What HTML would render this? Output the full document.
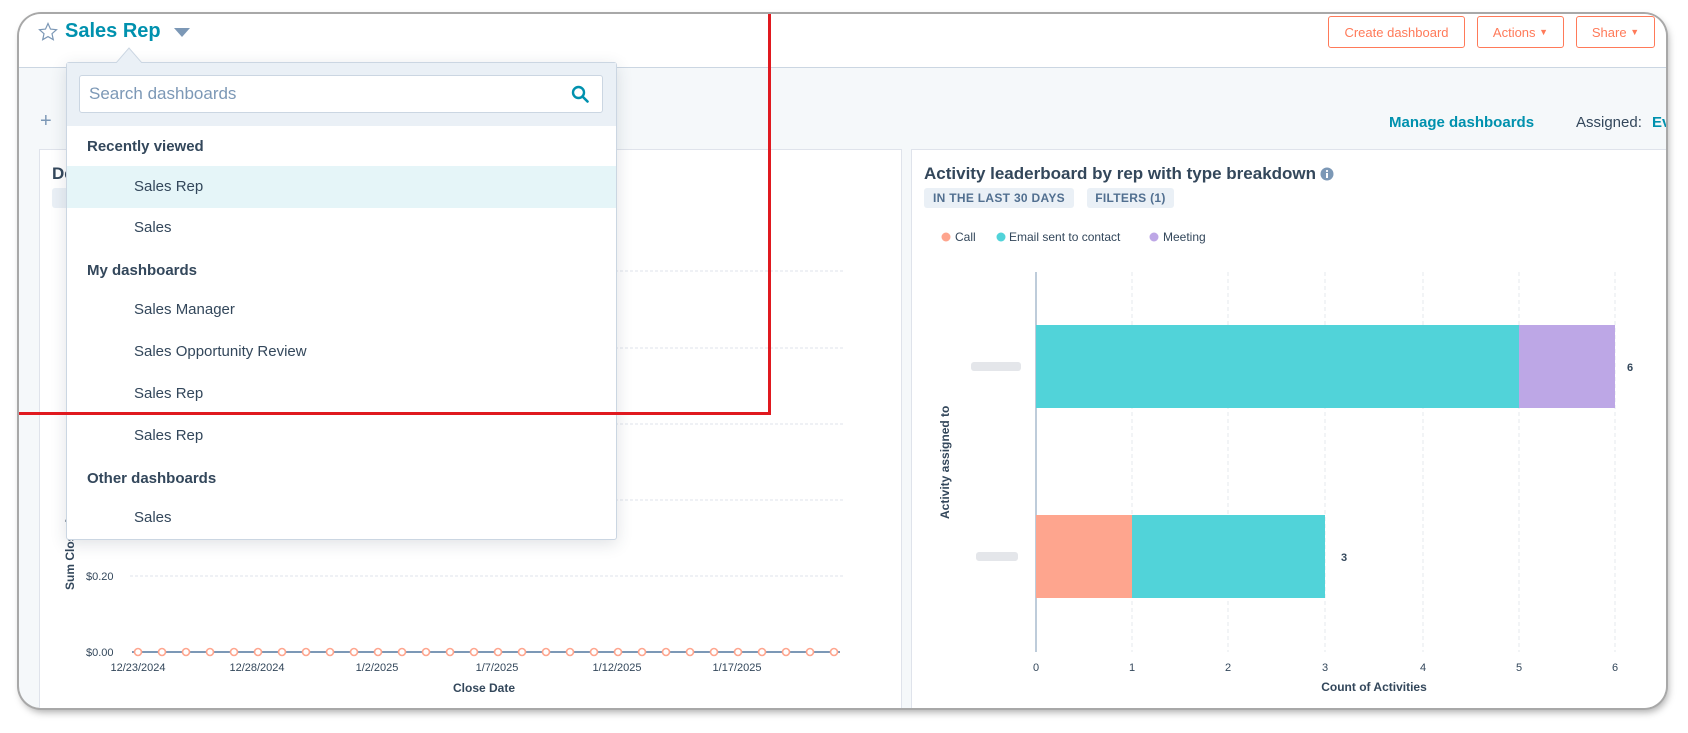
<!DOCTYPE html>
<html><head><meta charset="utf-8"><style>
*{box-sizing:border-box;margin:0;padding:0}
body{width:1688px;height:733px;background:#fff;position:relative;overflow:hidden;font-family:"Liberation Sans",sans-serif;color:#33475b}
.frame{position:absolute;left:19px;top:14px;width:1647px;height:694px;border-radius:22px;overflow:hidden;box-shadow:0 0 0 2px #a8a8a8,2px 4px 8px rgba(0,0,0,.35);background:#f5f8fa}
.in{position:absolute;left:-19px;top:-14px;width:1688px;height:733px}
.a{position:absolute;white-space:nowrap}
.btn{position:absolute;top:16px;height:32px;border:1px solid #ff7a59;border-radius:3px;color:#ff7a59;font-size:13px;display:flex;align-items:center;justify-content:center;background:#fff}
.tag{position:absolute;height:20px;background:#eaf0f6;border-radius:3px;font-size:12px;font-weight:bold;color:#516f90;display:flex;align-items:center;justify-content:center;letter-spacing:.3px}
.item{position:absolute;left:134px;font-size:15px;color:#33475b}
.hd{position:absolute;left:87px;font-size:15px;font-weight:bold;color:#33475b}
</style></head><body>
<div class="frame"><div class="in">
<div class="a" style="left:0;top:0;width:1688px;height:68px;background:#fff;border-bottom:1px solid #cbd6e2"></div>
<svg class="a" style="left:38px;top:22px" width="20" height="20" viewBox="0 0 20 20"><path d="M10 1.5l2.5 5.6 6 .6-4.5 4 1.3 6-5.3-3.1-5.3 3.1 1.3-6-4.5-4 6-.6z" fill="none" stroke="#7c98b6" stroke-width="1.2"/></svg>
<div class="a" style="left:65px;top:20px;font-size:20px;font-weight:bold;color:#0091ae">Sales Rep</div>
<svg class="a" style="left:174px;top:28px" width="16" height="10"><path d="M0 0h16L8 9z" fill="#7c98b6"/></svg>
<div class="btn" style="left:1328px;width:137px">Create dashboard</div>
<div class="btn" style="left:1477px;width:87px">Actions&nbsp;<span style="font-size:9px">▼</span></div>
<div class="btn" style="left:1576px;width:79px">Share&nbsp;<span style="font-size:9px">▼</span></div>
<div class="a" style="left:40px;top:110px;font-size:20px;color:#7c98b6">+</div>
<div class="a" style="left:1389px;top:114px;font-size:15px;font-weight:bold;color:#0091ae">Manage dashboards</div>
<div class="a" style="left:1576px;top:114px;font-size:15px;color:#33475b">Assigned: <b style="color:#0091ae;margin-left:6px">Everyone</b></div>
<div class="a" style="left:39px;top:149px;width:863px;height:600px;background:#fff;border:1px solid #dfe3eb"></div>
<div class="a" style="left:52px;top:164px;font-size:17px;font-weight:bold">Deal forecast</div>
<div class="tag" style="left:52px;top:188px;width:90px">IN THE</div>
<svg class="a" style="left:0;top:0" width="900" height="733">
<g stroke="#dfe3eb" stroke-dasharray="3,2"><line x1="130" y1="271" x2="845" y2="271"/><line x1="130" y1="348" x2="845" y2="348"/><line x1="130" y1="424" x2="845" y2="424"/><line x1="130" y1="500" x2="845" y2="500"/><line x1="130" y1="576" x2="845" y2="576"/></g>
<line x1="132" y1="652" x2="840" y2="652" stroke="#7c98b6" stroke-width="2"/>
<g fill="#fff" stroke="#fea58e" stroke-width="1.6">
<circle cx="138" cy="652" r="3.5"/><circle cx="162" cy="652" r="3.5"/><circle cx="186" cy="652" r="3.5"/><circle cx="210" cy="652" r="3.5"/><circle cx="234" cy="652" r="3.5"/><circle cx="258" cy="652" r="3.5"/><circle cx="282" cy="652" r="3.5"/><circle cx="306" cy="652" r="3.5"/><circle cx="330" cy="652" r="3.5"/><circle cx="354" cy="652" r="3.5"/><circle cx="378" cy="652" r="3.5"/><circle cx="402" cy="652" r="3.5"/><circle cx="426" cy="652" r="3.5"/><circle cx="450" cy="652" r="3.5"/><circle cx="474" cy="652" r="3.5"/><circle cx="498" cy="652" r="3.5"/><circle cx="522" cy="652" r="3.5"/><circle cx="546" cy="652" r="3.5"/><circle cx="570" cy="652" r="3.5"/><circle cx="594" cy="652" r="3.5"/><circle cx="618" cy="652" r="3.5"/><circle cx="642" cy="652" r="3.5"/><circle cx="666" cy="652" r="3.5"/><circle cx="690" cy="652" r="3.5"/><circle cx="714" cy="652" r="3.5"/><circle cx="738" cy="652" r="3.5"/><circle cx="762" cy="652" r="3.5"/><circle cx="786" cy="652" r="3.5"/><circle cx="810" cy="652" r="3.5"/><circle cx="834" cy="652" r="3.5"/></g>
<g font-family="Liberation Sans" font-size="11" fill="#33475b">
<text x="86" y="580">$0.20</text><text x="86" y="656">$0.00</text>
<g text-anchor="middle"><text x="138" y="671">12/23/2024</text><text x="257" y="671">12/28/2024</text><text x="377" y="671">1/2/2025</text><text x="497" y="671">1/7/2025</text><text x="617" y="671">1/12/2025</text><text x="737" y="671">1/17/2025</text>
<text x="484" y="692" font-weight="bold" font-size="12">Close Date</text></g>
<text transform="translate(74,590) rotate(-90)" font-weight="bold" font-size="12">Sum Close Amount</text></g>
</svg>
<div class="a" style="left:911px;top:149px;width:780px;height:600px;background:#fff;border:1px solid #dfe3eb"></div>
<div class="a" style="left:924px;top:164px;font-size:17px;font-weight:bold">Activity leaderboard by rep with type breakdown</div>
<svg class="a" style="left:1320px;top:167px" width="14" height="14"><circle cx="7" cy="7" r="6.5" fill="#7c98b6"/><rect x="6" y="6" width="2" height="5" fill="#fff"/><circle cx="7" cy="4" r="1.1" fill="#fff"/></svg>
<div class="tag" style="left:924px;top:188px;width:150px">IN THE LAST 30 DAYS</div>
<div class="tag" style="left:1087px;top:188px;width:87px">FILTERS (1)</div>
<svg class="a" style="left:911px;top:149px" width="760" height="560">
<g font-family="Liberation Sans" font-size="12" fill="#33475b">
<circle cx="35" cy="88" r="4.5" fill="#fea58e"/><text x="44" y="92">Call</text>
<circle cx="90" cy="88" r="4.5" fill="#51d3d9"/><text x="98" y="92">Email sent to contact</text>
<circle cx="243" cy="88" r="4.5" fill="#bda7e6"/><text x="252" y="92">Meeting</text>
</g>
<g stroke="#e5e8ec" stroke-dasharray="4,3"><line x1="221" y1="123" x2="221" y2="503"/><line x1="317" y1="123" x2="317" y2="503"/><line x1="414" y1="123" x2="414" y2="503"/><line x1="512" y1="123" x2="512" y2="503"/><line x1="608" y1="123" x2="608" y2="503"/><line x1="704" y1="123" x2="704" y2="503"/></g>
<line x1="125" y1="123" x2="125" y2="503" stroke="#7c98b6"/>
<rect x="125" y="176" width="483" height="83" fill="#51d3d9"/><rect x="608" y="176" width="96" height="83" fill="#bda7e6"/>
<rect x="125" y="366" width="96" height="83" fill="#fea58e"/><rect x="221" y="366" width="193" height="83" fill="#51d3d9"/>
<g font-family="Liberation Sans" font-size="11" fill="#33475b">
<text x="716" y="222" font-weight="bold">6</text><text x="430" y="412" font-weight="bold">3</text>
<g text-anchor="middle"><text x="125" y="522">0</text><text x="221" y="522">1</text><text x="317" y="522">2</text><text x="414" y="522">3</text><text x="512" y="522">4</text><text x="608" y="522">5</text><text x="704" y="522">6</text>
<text x="463" y="542" font-weight="bold" font-size="12">Count of Activities</text></g>
<text transform="translate(38,370) rotate(-90)" font-weight="bold" font-size="12">Activity assigned to</text>
<rect x="60" y="213" width="50" height="9" fill="#e4e6ea" rx="3"/><rect x="65" y="403" width="42" height="9" fill="#e4e6ea" rx="3"/>
</g></svg>
<div class="a" style="left:66px;top:62px;width:551px;height:478px;background:#fff;border:1px solid #cbd6e2;border-radius:3px;box-shadow:0 4px 16px rgba(45,62,80,.15)"></div>
<svg class="a" style="left:116px;top:47px" width="26" height="16"><path d="M0 16L13 1l13 15" fill="#eaf0f6" stroke="#cbd6e2"/></svg>
<div class="a" style="left:67px;top:63px;width:549px;height:63px;background:#eaf0f6"></div>
<div class="a" style="left:79px;top:75px;width:524px;height:38px;background:#fff;border:1px solid #cbd6e2;border-radius:3px"></div>
<div class="a" style="left:89px;top:84px;font-size:17px;color:#7c98b6">Search dashboards</div>
<svg class="a" style="left:571px;top:85px" width="18" height="18"><circle cx="7.5" cy="7.5" r="5.5" fill="none" stroke="#0091ae" stroke-width="2.4"/><path d="M11.5 11.5l5 5" stroke="#0091ae" stroke-width="2.6" stroke-linecap="round"/></svg>
<div class="hd" style="top:138px">Recently viewed</div>
<div class="a" style="left:67px;top:166px;width:549px;height:42px;background:#e5f5f8"></div>
<div class="item" style="top:178px">Sales Rep</div>
<div class="item" style="top:219px">Sales</div>
<div class="hd" style="top:262px">My dashboards</div>
<div class="item" style="top:301px">Sales Manager</div>
<div class="item" style="top:343px">Sales Opportunity Review</div>
<div class="item" style="top:385px">Sales Rep</div>
<div class="item" style="top:427px">Sales Rep</div>
<div class="hd" style="top:470px">Other dashboards</div>
<div class="item" style="top:509px">Sales</div>
<div class="a" style="left:768px;top:0;width:3px;height:415px;background:#e0191f"></div>
<div class="a" style="left:0;top:412px;width:771px;height:3px;background:#e0191f"></div>
</div></div>
</body></html>
